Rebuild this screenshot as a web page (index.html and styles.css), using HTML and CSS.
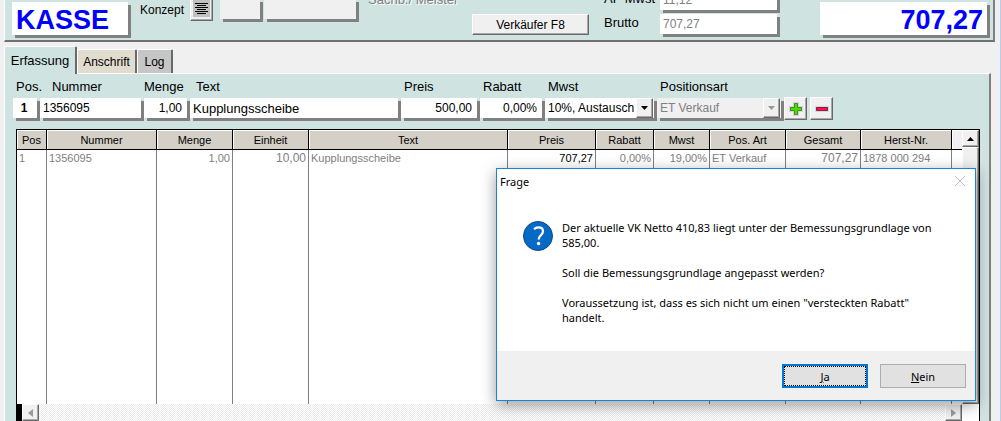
FILE: index.html
```html
<!DOCTYPE html>
<html lang="de">
<head>
<meta charset="utf-8">
<title>Kasse</title>
<link rel="stylesheet" href="styles.css">
</head>
<body>
<header class="summary">
  <h1 class="field mode">KASSE</h1>
  <span class="concept">Konzept</span>
  <button class="raised list-button" aria-label="Konzept öffnen">
    <svg width="17" height="17" viewBox="0 0 17 17" shape-rendering="crispEdges"><path fill="#c0c0c0" d="M0 0h17v17H0z"/><path stroke="#000" d="M2 3.5h13M4 5.500h9M2 7.500h13M4 9.500h9M2 11.500h13M4 13.500h9"/></svg>
  </button>
  <span class="field blank"></span>
  <span class="field blank wide"></span>
  <span class="foreman">Sachb./ Meister</span>
  <button class="raised seller">Verkäufer F8</button>
  <div class="amounts">
    <label for="tax">AP Mwst</label><input class="field" id="tax" value="11,12" readonly>
    <label for="gross">Brutto</label><input class="field" id="gross" value="707,27" readonly>
  </div>
  <output class="field total">707,27</output>
</header>

<nav class="tabs">
  <button class="tab active">Erfassung</button>
  <button class="tab address">Anschrift</button>
  <button class="tab log">Log</button>
</nav>

<main class="panel">
  <form class="entry">
    <label class="in-1" for="pos">Pos.</label>
    <label class="in-3" for="num">Nummer</label>
    <label for="qty">Menge</label>
    <label class="in-2" for="txt">Text</label>
    <label class="in-1" for="price">Preis</label>
    <label class="in-1" for="disc">Rabatt</label>
    <label class="in-1" for="vat">Mwst</label>
    <label class="in-1" for="kind">Positionsart</label>
    <span></span><span></span>
    <input class="field center" id="pos" value="1">
    <input class="field" id="num" value="1356095">
    <input class="field right" id="qty" value="1,00">
    <input class="field large" id="txt" value="Kupplungsscheibe">
    <input class="field right" id="price" value="500,00">
    <input class="field right" id="disc" value="0,00%">
    <span class="combo">
      <select class="field" id="vat"><option>10%, Austausch</option></select>
      <span class="raised drop"><svg width="7" height="4" viewBox="0 0 7 4"><path d="M0 0h7L3.500 4z"/></svg></span>
    </span>
    <span class="combo">
      <select class="field" id="kind" disabled><option>ET Verkauf</option></select>
      <span class="raised drop"><svg width="7" height="4" viewBox="0 0 7 4"><path fill="#999" d="M0 0h7L3.500 4z"/></svg></span>
    </span>
    <button type="button" class="raised tool" aria-label="Hinzufügen"><svg width="14" height="14" viewBox="0 0 14 14"><path d="M5 1h4v4h4v4H9v4H5V9H1V5h4z" fill="#4bd800" stroke="#e4c4f0" stroke-width="2"/><path d="M5.500 1.500h3v4h4v3h-4v4h-3v-4h-4v-3h4z" fill="#4bdc00" stroke="#319b08"/></svg></button>
    <button type="button" class="raised tool" aria-label="Entfernen"><svg width="14" height="14" viewBox="0 0 14 14"><path d="M0 4h14v6H0z" fill="#a8efdf"/><path d="M1.500 5.500h11v3h-11z" fill="#ff1050" stroke="#c00038"/></svg></button>
  </form>

  <section class="grid">
    <div class="grid-main">
      <table>
        <colgroup><col class="c-pos"><col class="c-num"><col class="c-mid"><col class="c-mid"><col><col class="c-price"><col class="c-disc"><col class="c-vat"><col class="c-mid"><col class="c-sum"><col class="c-maker"><col class="c-rest"></colgroup>
        <thead><tr><th>Pos</th><th>Nummer</th><th>Menge</th><th>Einheit</th><th>Text</th><th>Preis</th><th>Rabatt</th><th>Mwst</th><th>Pos. Art</th><th>Gesamt</th><th>Herst-Nr.</th><th class="rest"></th></tr></thead>
        <tbody>
          <tr class="item"><td>1</td><td>1356095</td><td class="right">1,00</td><td class="right big">10,00</td><td>Kupplungsscheibe</td><td class="right strong">707,27</td><td class="right">0,00%</td><td class="right">19,00%</td><td>ET Verkauf</td><td class="right big">707,27</td><td>1878 000 294</td><td></td></tr>
          <tr><td></td><td></td><td></td><td></td><td></td><td></td><td></td><td></td><td></td><td></td><td></td><td></td></tr>
        </tbody>
      </table>
      <div class="v-scroll">
        <button class="raised arrow" aria-label="Nach oben"><svg width="7" height="4" viewBox="0 0 7 4"><path d="M0 4h7L3.500 0z"/></svg></button>
        <div class="raised thumb"></div>
      </div>
    </div>
    <div class="h-scroll">
      <button class="raised arrow" aria-label="Nach links"><svg width="5" height="8" viewBox="0 0 5 8"><path fill="#999" d="M5 0v8L0 4z"/></svg></button>
      <div class="track"></div>
      <button class="raised arrow" aria-label="Nach rechts"><svg width="5" height="8" viewBox="0 0 5 8"><path fill="#999" d="M0 0v8l5-4z"/></svg></button>
      <div class="corner"></div>
    </div>
  </section>
</main>

<div class="dialog" role="dialog" aria-labelledby="dialog-title">
  <div class="dialog-bar">
    <span id="dialog-title">Frage</span>
    <button class="close" aria-label="Schließen"><svg width="12" height="12" viewBox="0 0 12 12"><path d="M1 1l10 10M11 1L1 11" stroke="#bbb" fill="none"/></svg></button>
  </div>
  <div class="dialog-body">
    <svg class="question" width="32" height="32" viewBox="0 0 32 32"><circle cx="16" cy="16" r="14.500" fill="#0669c6" stroke="#10497e"/><path d="M12 9.300Q13.700 7.300 16.500 7.300c3 0 4.500 1.600 4.500 3.900 0 3.900-4.300 4.400-4.300 8.300" fill="none" stroke="#fff" stroke-width="2.200"/><circle cx="16.600" cy="23.500" r="1.700" fill="#fff"/></svg>
    <div class="message">
      <p>Der aktuelle VK Netto 410,83 liegt unter der Bemessungsgrundlage von 585,00.</p>
      <p>Soll die Bemessungsgrundlage angepasst werden?</p>
      <p>Voraussetzung ist, dass es sich nicht um einen "versteckten Rabatt" handelt.</p>
    </div>
  </div>
  <div class="dialog-actions">
    <button class="choice default"><span><u>J</u>a</span></button>
    <button class="choice"><span><u>N</u>ein</span></button>
  </div>
</div>
</body>
</html>
```

FILE: styles.css
```css
* { box-sizing: border-box; }

body {
  margin: 0;
  height: 100vh;
  overflow: hidden;
  display: flex;
  flex-direction: column;
  padding: 0 5px 0 4px;
  background: #f0f0f0;
  border-right: 1px solid #b4cfee;
  font: 13px/16px "Liberation Sans", Arial, sans-serif;
  color: #000;
}

button, input, select { font: inherit; color: inherit; margin: 0; }
button { padding: 0; }

.field {
  display: block;
  width: 100%;
  height: 20px;
  padding: 0 5px 0 3px;
  border: 0;
  border-radius: 0;
  outline: 0;
  background: #fff;
  box-shadow: 3px 3px 0 #808080;
}

.raised {
  display: flex;
  align-items: center;
  justify-content: center;
  background: #f0f0f0;
  border: 1px solid;
  border-color: #fff #696969 #696969 #fff;
  box-shadow: inset -1px -1px 0 #a8a8a8;
}

.right { text-align: right; }
.center { text-align: center; }

/* Summary bar */
.summary {
  flex: none;
  display: flex;
  align-items: flex-end;
  height: 42px;
  overflow: hidden;
  padding: 0 6px 0 7px;
  background: #cfe3e1;
  border: solid;
  border-width: 0 2px 2px 1px;
  border-color: #fff #808080 #707070 #fff;
}

.mode, .total {
  height: 33px;
  margin: 0 0 5px;
  padding: 0 4px;
  font-size: 27px;
  font-weight: bold;
  line-height: 36px;
  color: #00f;
}
.mode { width: 116px; margin-right: 12px; }
.total { width: 167px; margin-left: auto; text-align: right; }

.concept { width: 50px; margin-bottom: 22px; font-size: 12px; }
.list-button { width: 23px; height: 25px; margin: 0 7px 19px 0; }
.blank { width: 40px; margin: 0 4px 21px 0; background: #f0f0f0; }
.blank.wide { width: 92px; margin-right: 12px; }
.foreman { width: 104px; margin-bottom: 32px; color: #808080; text-shadow: 1px 1px 0 #fff; white-space: nowrap; }
.seller { width: 117px; height: 21px; margin: 0 15px 5px 0; font-size: 12px; }

.amounts {
  display: grid;
  grid-template-columns: 56px 117px;
  row-gap: 4px;
  margin-bottom: 6px;
}
.amounts .field { font-size: 12px; color: #808080; }
.amounts label { line-height: 18px; white-space: nowrap; }

/* Tabs */
.tabs {
  flex: none;
  display: flex;
  align-items: flex-end;
  height: 31px;
}
.tab {
  height: 24px;
  border: solid;
  border-width: 1px 2px 0 1px;
  border-color: #fff #696969 #fff #fff;
  border-radius: 2px 2px 0 0;
  font-size: 12px;
}
.tab.active { width: 73px; height: 28px; margin-bottom: -1px; font-size: 13px; background: #cfe3e1; z-index: 1; }
.tab.address { width: 60px; background: #e2dccf; }
.tab.log { width: 36px; background: #c6c6c6; }

/* Entry form */
.panel {
  flex: 1;
  display: flex;
  flex-direction: column;
  min-height: 0;
  margin-right: 4px;
  padding: 5px 9px 0 11px;
  background: #cfe3e1;
  border: solid;
  border-width: 1px 2px 0 1px;
  border-color: #fff #808080 #fff #fff;
}
.entry {
  flex: none;
  display: grid;
  grid-template-columns: 24px 101px 43px 208px 76px 62px 109px 124px 23px 23px;
  column-gap: 3px;
  row-gap: 3px;
  margin: 0 0 9px -3px;
}
.entry > * { min-width: 0; }
.entry .field { font-size: 12px; }
.entry .large { font-size: 13px; }
.entry #pos { font-weight: bold; }
.in-1 { padding-left: 3px; }
.in-2 { padding-left: 6px; }
.in-3 { padding-left: 12px; }

.combo { position: relative; }
.combo select { appearance: none; padding-right: 17px; }
.combo select:disabled { background: #f0f0f0; color: #808080; opacity: 1; }
.drop {
  position: absolute;
  top: 0;
  right: 1px;
  width: 17px;
  height: 20px;
  pointer-events: none;
}
.tool { height: 23px; margin-top: -1px; }

/* Item grid */
.grid {
  flex: 1;
  display: flex;
  flex-direction: column;
  min-height: 0;
  border: solid #000;
  border-width: 1px 1px 0;
  background: #fff;
}
.grid-main { flex: 1; display: flex; min-height: 0; }

table {
  flex: 1;
  table-layout: fixed;
  border-collapse: separate;
  border-spacing: 0;
  font-size: 11px;
  line-height: 16px;
}
.c-pos { width: 30px; }
.c-num { width: 110px; }
.c-mid { width: 76px; }
.c-price { width: 88px; }
.c-disc { width: 58px; }
.c-vat { width: 56px; }
.c-sum { width: 75px; }
.c-maker { width: 91px; }
.c-rest { width: 10px; }
th {
  height: 20px;
  padding: 0;
  font-weight: normal;
  background: #d4d0c8;
  border: solid #000;
  border-width: 0 1px 1px 0;
  box-shadow: inset 1px 1px 0 #fff;
}
th.rest { background: #f0f0f0; border-right: 0; }
td {
  padding: 0 2px;
  color: #808080;
  border-right: 1px solid #808080;
  white-space: nowrap;
}
td:last-child { border-right: 0; }
.item td { height: 16px; }
td.big { font-size: 12px; }
td.strong { color: #000; }

.v-scroll { width: 17px; display: flex; flex-direction: column; }
.thumb { flex: 1; }
.arrow { flex: none; width: 17px; height: 17px; }
.h-scroll { flex: none; display: flex; height: 17px; border-left: 5px solid #000; }
.track { flex: 1; background: repeating-conic-gradient(#fff 0 25%, #ebebeb 0 50%) 0 0 / 2px 2px; }
.corner { width: 17px; }

/* Confirmation dialog */
.dialog {
  position: absolute;
  right: 25px;
  bottom: 20px;
  width: 480px;
  background: #fff;
  border: 1px solid #1883d7;
  box-shadow: 0 4px 14px rgba(0, 0, 0, 0.4);
  font: 11px/15px "Noto Sans", "Open Sans", sans-serif;
}
.dialog-bar {
  display: flex;
  align-items: center;
  justify-content: space-between;
  height: 24px;
  padding: 0 9px 0 3px;
}
.close { display: flex; border: 0; background: none; }
.dialog-body { display: flex; gap: 8px; padding: 27px 36px 26px 25px; }
.question { flex: none; }
.message { flex: 1; }
.message p { margin: 0 0 15px; }
.message p:last-child { margin: 0; }
.dialog-actions {
  display: flex;
  justify-content: flex-end;
  gap: 12px;
  padding: 13px 9px 12px;
  background: #f0f0f0;
}
.choice { width: 86px; height: 24px; padding: 0; background: #e1e1e1; border: 1px solid #adadad; }
.choice.default { border: 2px solid #0078d7; outline: 1px dotted #000; outline-offset: -3px; }
```
